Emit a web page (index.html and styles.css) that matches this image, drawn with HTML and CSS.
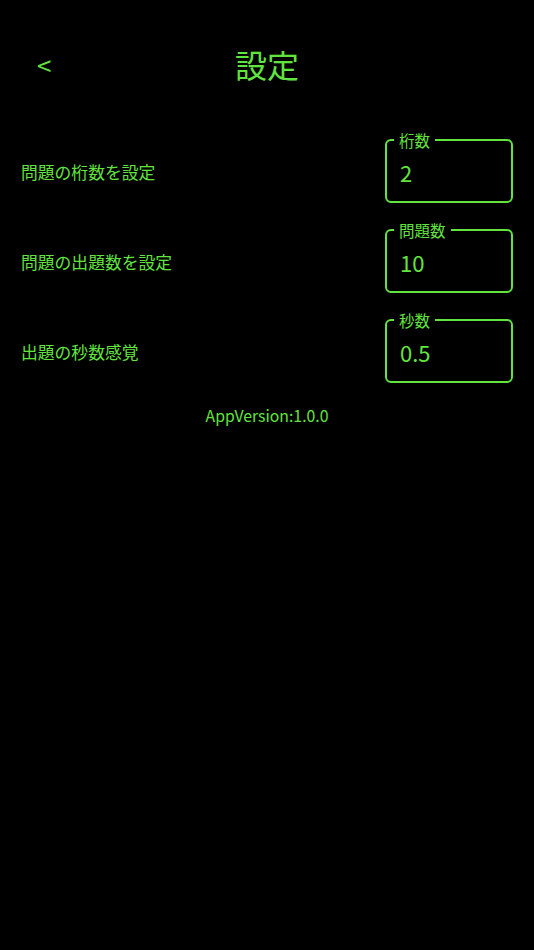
FILE: index.html
```html
<!DOCTYPE html>
<html lang="ja">
<head>
<meta charset="utf-8">
<title>設定</title>
<link rel="stylesheet" href="styles.css">
</head>
<body>
<div class="screen">
  <header class="header">
    <span class="back">&lt;</span>
    <h1 class="title">設定</h1>
    <span class="spacer"></span>
  </header>
  <main class="rows">
    <div class="row">
      <span class="label">問題の桁数を設定</span>
      <fieldset class="field">
        <legend class="legend">桁数</legend>
        <span class="value">2</span>
      </fieldset>
    </div>
    <div class="row">
      <span class="label">問題の出題数を設定</span>
      <fieldset class="field">
        <legend class="legend">問題数</legend>
        <span class="value">10</span>
      </fieldset>
    </div>
    <div class="row">
      <span class="label">出題の秒数感覚</span>
      <fieldset class="field">
        <legend class="legend">秒数</legend>
        <span class="value">0.5</span>
      </fieldset>
    </div>
  </main>
  <p class="version">AppVersion:1.0.0</p>
</div>
</body>
</html>
```
FILE: styles.css
```css
html, body {
  margin: 0;
  padding: 0;
  background: #000;
}
body {
  font-family: "Noto Sans CJK JP", "Noto Sans", sans-serif;
  color: #62e43f;
  width: 534px;
  height: 950px;
}
.screen {
  display: flex;
  flex-direction: column;
}
.header {
  height: 127px;
  display: grid;
  grid-template-columns: 1fr auto 1fr;
  align-items: center;
  padding: 0 37px;
  box-sizing: border-box;
}
.back {
  font-size: 26px;
  line-height: 1;
  margin-top: 2px;
}
.title {
  margin: 0;
  font-size: 32px;
  font-weight: 400;
  line-height: 1;
}
.rows {
  display: flex;
  flex-direction: column;
  padding: 0 21px 0 21px;
}
.row {
  height: 90px;
  display: flex;
  align-items: center;
  justify-content: space-between;
}
.label {
  font-size: 16.8px;
  line-height: 1.2;
}
.field {
  box-sizing: border-box;
  width: 128px;
  height: 72px;
  margin: 0 0 10px 0;
  padding: 0 14px;
  border: 2px solid #62e43f;
  border-radius: 6px;
  display: flex;
  align-items: center;
}
.legend {
  font-size: 15.5px;
  line-height: 18px;
  padding: 0 5px;
  margin-left: -7px;
}
.value {
  font-size: 22px;
  line-height: 1;
  margin-top: -6px;
  margin-left: -1px;
}
.version {
  margin: 9px 0 0 0;
  text-align: center;
  font-size: 15.8px;
  line-height: 20px;
}
```
